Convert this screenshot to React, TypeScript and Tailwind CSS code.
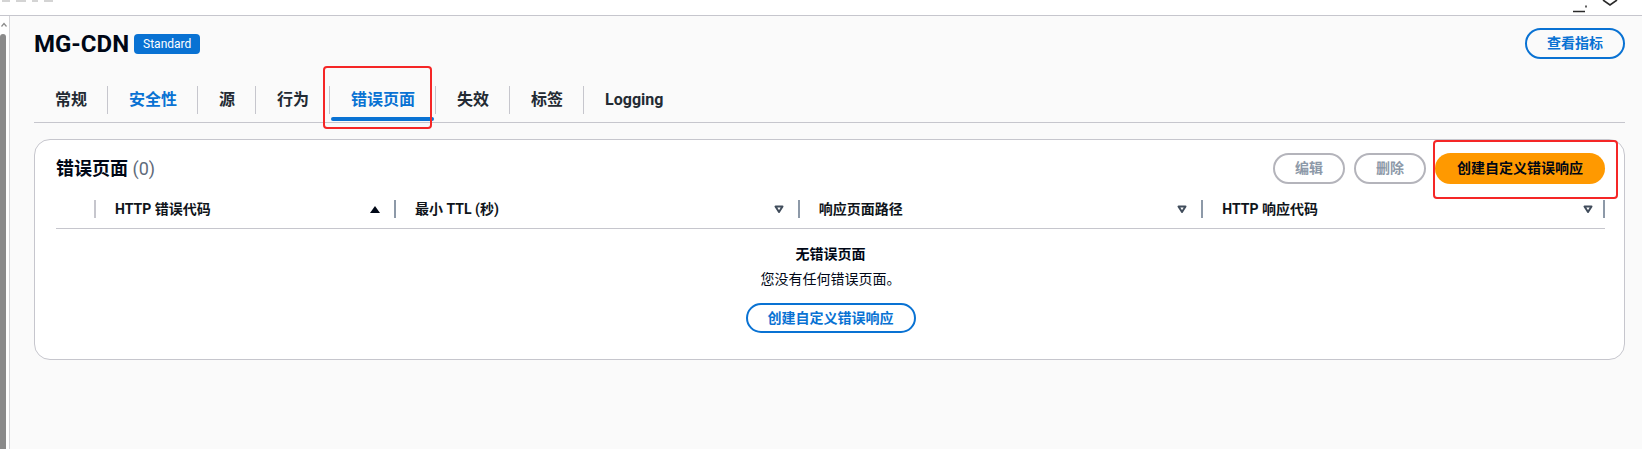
import React from "react";

const tabs = [
  { label: "常规" },
  { label: "安全性", blue: true },
  { label: "源" },
  { label: "行为" },
  { label: "错误页面", active: true },
  { label: "失效" },
  { label: "标签" },
  { label: "Logging" },
];

const CaretUp = () => (
  <svg width="10" height="9" viewBox="0 0 10 9">
    <polygon points="0,8 10,8 5,1" fill="#000716" />
  </svg>
);

const CaretDown = () => (
  <svg width="10" height="9" viewBox="0 0 10 9">
    <polygon
      points="1.5,1.5 8.5,1.5 5,7"
      fill="none"
      stroke="#414d5c"
      strokeWidth="2"
      strokeLinejoin="round"
    />
  </svg>
);

const HeaderCell = ({
  label,
  sorted,
  last,
  light,
}: {
  label: string;
  sorted?: boolean;
  last?: boolean;
  light?: boolean;
}) => (
  <div className="flex items-center">
    <span className={`w-[2px] h-[18px] ${light ? "bg-[#c6c6cd]" : "bg-[#8d99a8]"}`} />
    <span className="flex-1 pl-[19px] text-[14px] font-bold text-[#0f141a]">{label}</span>
    {sorted ? <CaretUp /> : <CaretDown />}
    {last ? (
      <>
        <span className="w-[10px]" />
        <span className="w-[2px] h-[18px] bg-[#8d99a8]" />
      </>
    ) : (
      <span className="w-[14px]" />
    )}
  </div>
);

export default function App() {
  return (
    <div className="w-[1642px] h-[449px] overflow-hidden bg-white flex flex-col font-[Roboto,'Noto_Sans_CJK_SC',sans-serif]">
      {/* browser strip */}
      <div className="relative h-[16px] shrink-0 border-b border-[#c6c6cd] bg-white">
        <div className="absolute left-[2px] top-0 flex gap-[6px]">
          <span className="w-[8px] h-[2px] bg-[#d4d4d4]" />
          <span className="w-[10px] h-[2px] bg-[#d4d4d4]" />
          <span className="w-[6px] h-[2px] bg-[#d4d4d4]" />
          <span className="w-[9px] h-[2px] bg-[#d4d4d4]" />
        </div>
        <svg className="absolute left-[1570px] top-0" width="56" height="15" viewBox="0 0 56 15">
          <path d="M3 11.5h12" stroke="#2a2a2a" strokeWidth="1.5" />
          <path d="M16 5.5v2" stroke="#2a2a2a" strokeWidth="1.5" />
          <path d="M33 0l7 5 7-5" fill="none" stroke="#2a2a2a" strokeWidth="1.6" />
        </svg>
      </div>

      <div className="flex flex-1">
        {/* scrollbar */}
        <div className="w-[9px] flex flex-col bg-white">
          <svg className="mt-[6px] ml-[1px]" width="6" height="5" viewBox="0 0 6 5">
            <path d="M0.5 4.5L3 1.5 5.5 4.5" fill="none" stroke="#8a8a8a" strokeWidth="1.2" />
          </svg>
          <div className="mt-[7px] w-[6px] flex-1 rounded-t-[3px] bg-[#8a8a8a]" />
        </div>
        <div className="w-px bg-[#d5d5d8]" />

        {/* page */}
        <div className="flex-1 bg-[#fafafa] pl-[24px] pr-[17px]">
          {/* header */}
          <div className="mt-[12px] h-[31px] flex items-center justify-between">
            <div className="flex items-center">
              <h1 className="text-[24px] leading-none font-bold text-[#000716]">MG-CDN</h1>
              <span className="ml-[5px] h-[20px] px-[9px] rounded-[4px] bg-[#0972d3] text-white text-[12px] leading-[20px]">
                Standard
              </span>
            </div>
            <button className="w-[100px] h-[31px] rounded-full border-2 border-[#0972d3] text-[#0972d3] text-[14px] font-bold">
              查看指标
            </button>
          </div>

          {/* tabs */}
          <div className="mt-[19px] h-[45px] flex items-center border-b border-[#c6c6cd]">
            {tabs.map((t, i) => (
              <React.Fragment key={t.label}>
                {i > 0 && <span className="w-px h-[28px] bg-[#c6c6cd]" />}
                <div
                  className={`relative h-full flex items-center pl-[21px] pr-[20px] text-[16px] font-bold ${
                    t.active || t.blue ? "text-[#0972d3]" : "text-[#232a33]"
                  }`}
                >
                  {t.label}
                  {t.active && (
                    <>
                      <span className="absolute left-[1px] right-[1px] bottom-[1px] h-[4px] rounded-full bg-[#0972d3]" />
                      <span className="absolute left-[-7px] right-[3px] top-[-12px] bottom-[-7px] rounded-[4px] border-2 border-[#f52626] pointer-events-none" />
                    </>
                  )}
                </div>
              </React.Fragment>
            ))}
          </div>

          {/* error pages container */}
          <div className="mt-[16px] rounded-[16px] border border-[#c6c6cd] bg-white pt-[13px] pl-[21px] pr-[19px] pb-[26px]">
            <div className="h-[31px] flex items-center justify-between">
              <h2 className="text-[18px] font-bold text-[#000716]">
                错误页面 <span className="font-normal text-[#5f6b7a]">(0)</span>
              </h2>
              <div className="flex items-center gap-[9px]">
                <button className="w-[72px] h-[31px] rounded-full border-2 border-[#b4b4bb] text-[#8d99a8] text-[14px] font-bold">
                  编辑
                </button>
                <button className="w-[72px] h-[31px] rounded-full border-2 border-[#b4b4bb] text-[#8d99a8] text-[14px] font-bold">
                  删除
                </button>
                <div className="relative">
                  <button className="w-[170px] h-[31px] rounded-full bg-[#ff9900] text-[#000716] text-[14px] font-bold">
                    创建自定义错误响应
                  </button>
                  <span className="absolute left-[-2px] right-[-13px] top-[-13px] bottom-[-15px] rounded-[4px] border-2 border-[#f52626] pointer-events-none" />
                </div>
              </div>
            </div>

            {/* table header */}
            <div className="mt-[6px] h-[39px] grid grid-cols-[38px_300px_1fr_1fr_1fr] border-b border-[#c6c6cd]">
              <div />
              <HeaderCell label="HTTP 错误代码" sorted light />
              <HeaderCell label="最小 TTL (秒)" />
              <HeaderCell label="响应页面路径" />
              <HeaderCell label="HTTP 响应代码" last />
            </div>

            {/* empty state */}
            <div className="pt-[15px] flex flex-col items-center text-[#000716]">
              <div className="text-[14px] leading-[20px] font-bold">无错误页面</div>
              <div className="mt-[5px] text-[14px] leading-[20px]">您没有任何错误页面。</div>
              <button className="mt-[14px] w-[170px] h-[30px] rounded-full border-2 border-[#0972d3] text-[#0972d3] text-[14px] font-bold">
                创建自定义错误响应
              </button>
            </div>
          </div>
        </div>
      </div>
    </div>
  );
}
